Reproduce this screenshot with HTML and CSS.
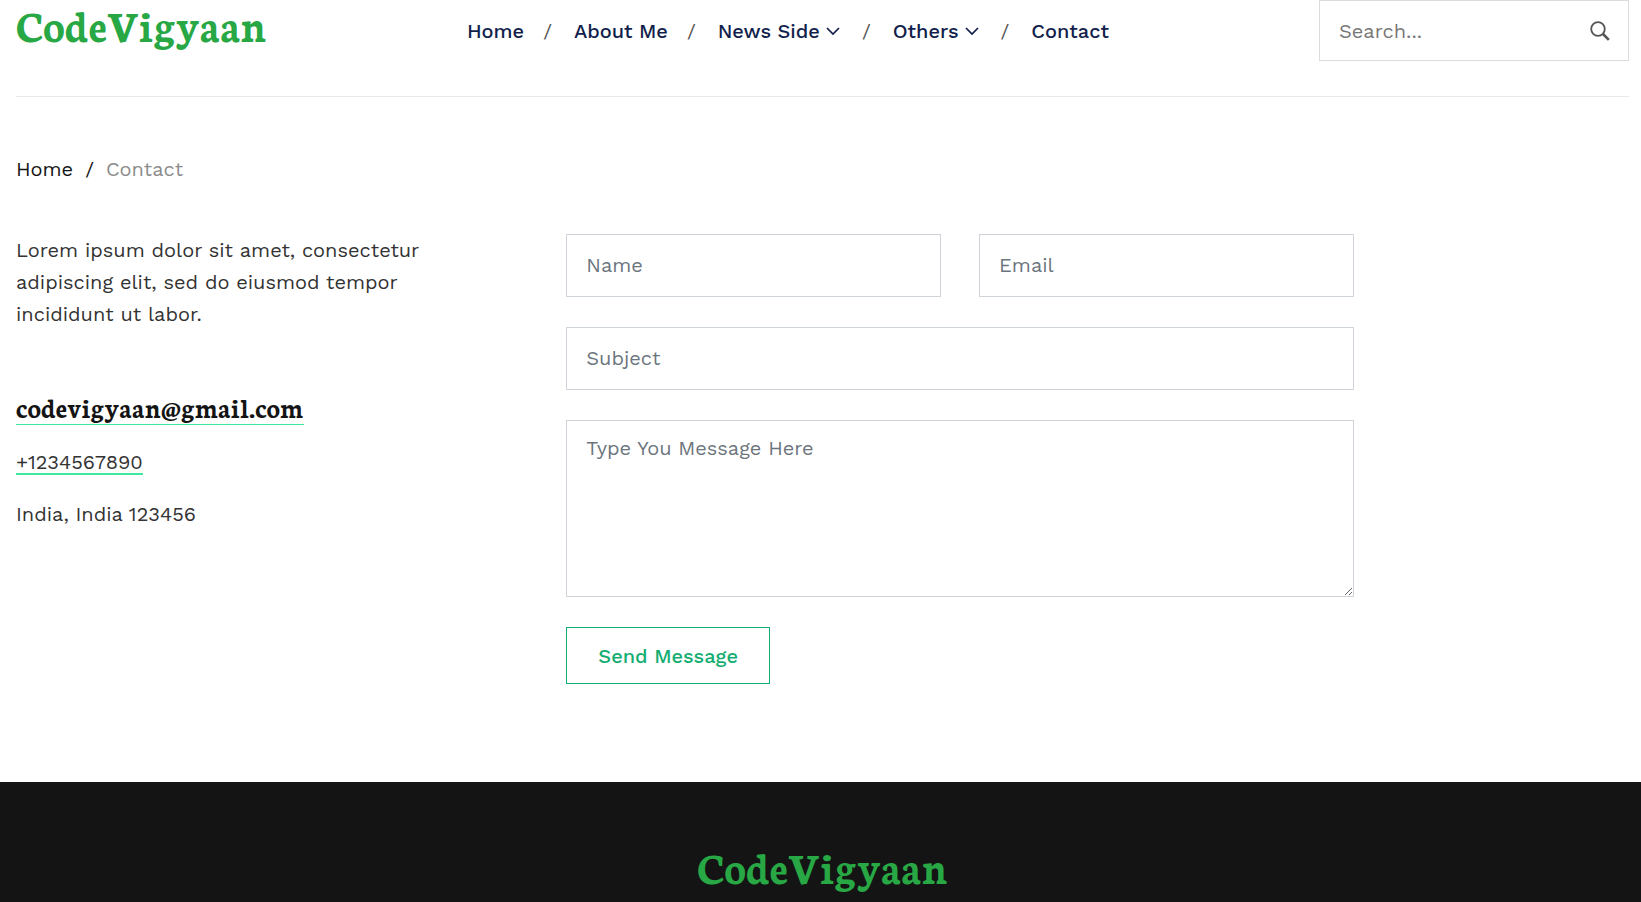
FILE: index.html
```html
<!DOCTYPE html>
<html lang="en">
<head>
  <meta charset="UTF-8">
  <meta name="viewport" content="width=device-width, initial-scale=1.0">
  <title>CodeVigyaan - Contact</title>
  <link rel="stylesheet" href="styles.css">
</head>
<body>
  <header class="site-header">
    <a href="#" class="logo">CodeVigyaan</a>
    <nav class="main-nav" aria-label="Main">
      <ul class="nav-list">
        <li><a href="#">Home</a></li>
        <li><a href="#">About Me</a></li>
        <li class="has-menu">
          <a href="#">News Side
            <svg class="chevron" viewBox="0 0 14 9" aria-hidden="true"><path d="M1 1l6 6 6-6"/></svg>
          </a>
        </li>
        <li class="has-menu">
          <a href="#">Others
            <svg class="chevron" viewBox="0 0 14 9" aria-hidden="true"><path d="M1 1l6 6 6-6"/></svg>
          </a>
        </li>
        <li><a href="#">Contact</a></li>
      </ul>
    </nav>
    <form class="search" role="search">
      <input type="search" placeholder="Search..." aria-label="Search">
      <button type="submit" aria-label="Submit search">
        <svg viewBox="0 0 20 20" aria-hidden="true"><circle cx="8" cy="8" r="6.8"/><path class="handle" d="M13 13l5.8 5.8"/></svg>
      </button>
    </form>
  </header>

  <main class="page">
    <nav class="breadcrumb" aria-label="Breadcrumb">
      <a href="#">Home</a>
      <span class="divider">/</span>
      <span class="current">Contact</span>
    </nav>

    <div class="row">
      <section class="contact-info">
        <p class="intro">Lorem ipsum dolor sit amet, consectetur adipiscing elit, sed do eiusmod tempor incididunt ut labor.</p>
        <a href="mailto:codevigyaan@gmail.com" class="email">codevigyaan@gmail.com</a>
        <a href="tel:+1234567890" class="phone">+1234567890</a>
        <p class="address">India, India 123456</p>
      </section>

      <form class="contact-form">
        <input type="text" placeholder="Name" aria-label="Name">
        <input type="email" placeholder="Email" aria-label="Email">
        <input type="text" class="wide" placeholder="Subject" aria-label="Subject">
        <textarea class="wide" rows="5" placeholder="Type You Message Here" aria-label="Message"></textarea>
        <button type="submit" class="btn">Send Message</button>
      </form>
    </div>
  </main>

  <footer class="site-footer">
    <a href="#" class="logo">CodeVigyaan</a>
  </footer>
</body>
</html>
```
FILE: styles.css
```css
* {
  box-sizing: border-box;
}
body {
  margin: 0;
  font-family: "Work Sans", Inter, "Noto Sans", sans-serif;
  font-size: 20px;
  line-height: 32px;
  color: #333;
  background-color: #fff;
}
a {
  color: inherit;
  text-decoration: none;
}
.logo {
  font-family: Neuton, "Liberation Serif", serif;
  font-size: 45px;
  line-height: 50px;
  font-weight: 700;
  color: #28a745;
}

/* Header */
.site-header {
  display: grid;
  grid-template-columns: 451px 1fr 310px;
  align-items: start;
  margin: 0 12px 0 16px;
  padding-bottom: 35px;
  border-bottom: 1px solid #e9e9e9;
}
.nav-list {
  display: flex;
  margin: 0;
  padding: 15px 0 0;
  list-style: none;
}
.nav-list li {
  display: flex;
}
.nav-list li + li::before {
  content: "/";
  margin: 0 22px 0 19px;
  color: #555;
}
.nav-list .has-menu + li::before {
  margin-left: 22px;
}
.nav-list a {
  display: flex;
  align-items: center;
  gap: 6px;
  font-weight: 500;
  color: #121f4c;
}
.chevron {
  width: 14px;
  height: 9px;
  fill: none;
  stroke: currentColor;
  stroke-width: 1.7;
}
.search {
  display: flex;
  align-items: center;
  height: 61px;
  border: 1px solid #dcdcdc;
}
.search input {
  flex: 1;
  min-width: 0;
  padding: 0 0 0 19px;
  border: 0;
  font: inherit;
  outline: none;
}
.search input::placeholder {
  color: #777;
}
.search button {
  display: flex;
  padding: 0 18px;
  border: 0;
  background: none;
}
.search svg {
  width: 20px;
  height: 20px;
  fill: none;
  stroke: #555;
  stroke-width: 1.8;
}
.search .handle {
  stroke-width: 2.6;
}

/* Contact page */
.page {
  padding: 56px 12px 98px 16px;
}
.breadcrumb {
  display: flex;
  gap: 12px;
  margin-bottom: 49px;
  color: #141414;
}
.breadcrumb .current {
  color: #8c8c8c;
}
.row {
  display: grid;
  grid-template-columns: repeat(12, 1fr);
  column-gap: 38px;
  align-items: start;
}
.contact-info {
  grid-column: span 4;
  display: flex;
  flex-direction: column;
  align-items: flex-start;
}
.contact-info p {
  margin: 0;
}
.contact-info .intro {
  max-width: 430px;
  margin-bottom: 64px;
}
.email {
  margin-bottom: 26px;
  padding-bottom: 4px;
  border-bottom: 1px solid #3de8a0;
  font-family: Neuton, "Liberation Serif", serif;
  font-size: 28px;
  font-weight: 700;
  line-height: 26px;
  color: #141414;
}
.phone {
  margin-bottom: 23px;
  border-bottom: 2px solid #3de8a0;
  line-height: 22px;
}
.contact-form {
  grid-column: span 6;
  display: grid;
  grid-template-columns: 1fr 1fr;
  gap: 30px 38px;
}
.contact-form input,
.contact-form textarea {
  width: 100%;
  height: 63px;
  padding: 0 19px 1px;
  border: 1px solid #ced4da;
  border-radius: 0;
  font: inherit;
  color: #333;
  outline: none;
}
.contact-form textarea {
  height: 177px;
  padding: 11px 19px;
  resize: vertical;
}
.contact-form ::placeholder {
  color: #6c757d;
}
.contact-form .wide {
  grid-column: 1 / -1;
}
.btn {
  justify-self: start;
  padding: 12px 31px 11px;
  border: 1px solid #14ad71;
  background: none;
  font: inherit;
  font-weight: 500;
  color: #14ad71;
}

/* Footer */
.site-footer {
  padding: 60px 12px 10px 16px;
  border-bottom: 1px solid #000;
  background-color: #141414;
  text-align: center;
}
.site-footer .logo {
  display: block;
}
```
